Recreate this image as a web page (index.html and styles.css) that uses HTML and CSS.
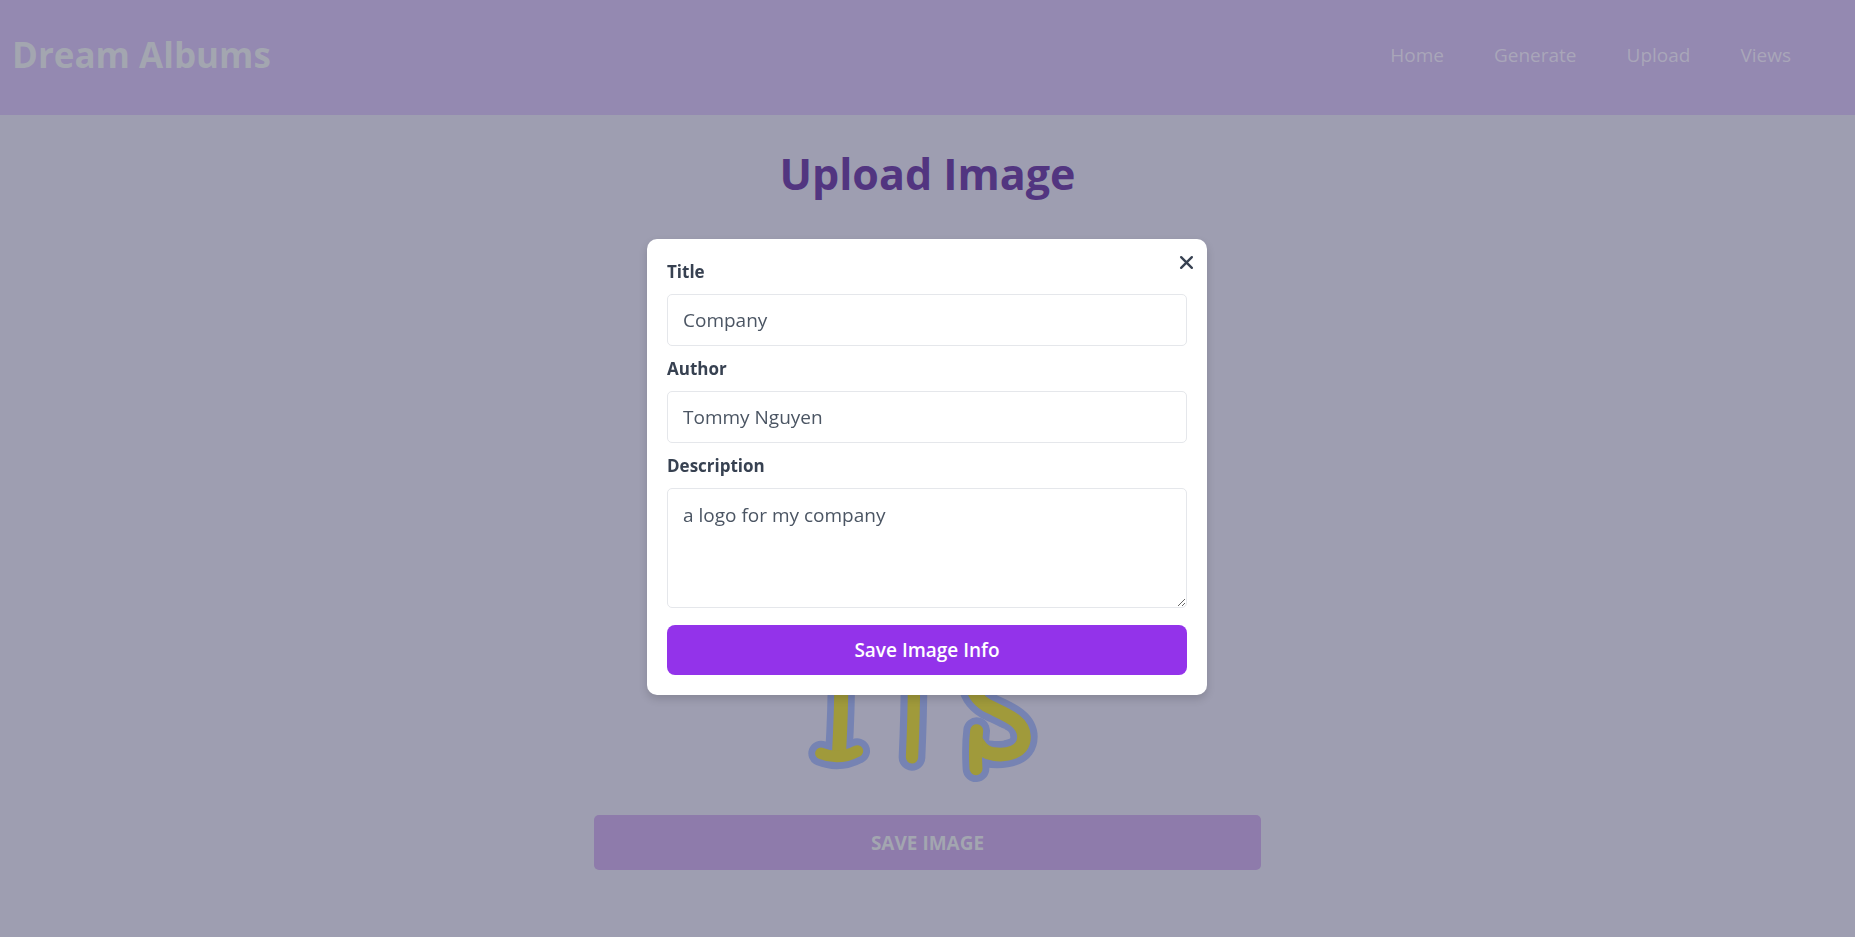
FILE: index.html
```
<!DOCTYPE html>
<html lang="en">
<head>
<meta charset="utf-8">
<meta name="viewport" content="width=device-width, initial-scale=1">
<title>Dream Albums</title>
<link rel="stylesheet" href="styles.css">
</head>
<body>
<header class="navbar">
  <a class="brand" href="#">Dream Albums</a>
  <nav class="nav-links">
    <a href="#">Home</a>
    <a href="#">Generate</a>
    <a href="#">Upload</a>
    <a href="#">Views</a>
  </nav>
</header>
<main class="page">
  <h1 class="page-title">Upload Image</h1>
  <svg class="preview" viewBox="0 -1335 885 1665" aria-hidden="true">
    <g class="outline">
      <path d="M184-100V0Q184 90 177 212" stroke-width="82"/>
      <path d="M123 220Q177 242 232 213" stroke-width="76"/>
      <path d="M402-100V0Q402 100 396 232" stroke-width="80"/>
      <path d="M600-100C560-40 560 40 620 76C665 100 731 118 732 170C732 218 680 228 622 222" stroke-width="82"/>
      <path d="M590 152Q584 200 588 266" stroke-width="80"/>
    </g>
    <path class="hole" d="M628 135C660 139 689 150 690 164C690 178 668 184 641 183Q634 165 628 135Z"/>
    <g class="fill">
      <path d="M184-100V0Q184 90 177 222" stroke-width="42"/>
      <path d="M123 220Q177 242 232 213" stroke-width="35"/>
      <path d="M402-100V0Q402 100 396 232" stroke-width="37"/>
      <path d="M600-100C560-40 560 40 620 76C665 100 731 118 732 170C732 218 680 228 640 222Q612 220 594 190" stroke-width="41"/>
      <path d="M590 152Q584 200 588 266" stroke-width="39"/>
    </g>
  </svg>
  <button class="save-image" type="button">SAVE IMAGE</button>
</main>
<div class="overlay">
  <form class="modal" role="dialog" aria-label="Image info">
    <button class="close" type="button" aria-label="Close">
      <svg viewBox="0 0 14 14" aria-hidden="true"><path d="M2 2L12 12M12 2L2 12"/></svg>
    </button>
    <label for="title">Title</label>
    <input id="title" type="text" value="Company">
    <label for="author">Author</label>
    <input id="author" type="text" value="Tommy Nguyen">
    <label for="description">Description</label>
    <textarea id="description">a logo for my company</textarea>
    <button class="submit" type="submit">Save Image Info</button>
  </form>
</div>
</body>
</html>
```
FILE: styles.css
```
* { box-sizing: border-box; }

body {
  margin: 0;
  min-height: 100vh;
  background: #9e9eb1;
  font: 19px/30px "Segoe UI", "Open Sans", "Noto Sans", sans-serif;
}

a { color: inherit; text-decoration: none; }

button, input, textarea { font: inherit; }

.navbar {
  display: flex;
  align-items: center;
  justify-content: space-between;
  padding: 30px 64px 35px 12px;
  background: #9489b1;
}

.brand {
  color: #a3a6b0;
  font-size: 35px;
  font-weight: 700;
  line-height: 50px;
}

.nav-links {
  display: flex;
  gap: 50px;
  color: #a9a6b9;
}

.page {
  display: flex;
  flex-direction: column;
  align-items: center;
  padding: 34px 20px 67px;
}

.page-title {
  margin: 0 0 36px;
  color: #523580;
  font-size: 43px;
  font-weight: 700;
  line-height: 50px;
}

.preview {
  width: 295px;
  height: 555px;
  fill: none;
  stroke-linecap: round;
  stroke-linejoin: round;
}

.preview .outline { stroke: #7683b3; }
.preview .fill { stroke: #a09a3b; }
.preview .hole { fill: #9e9eb1; }

.save-image {
  width: 667px;
  max-width: 100%;
  height: 55px;
  margin-top: 25px;
  border: 0;
  border-radius: 5px;
  background: #8e7bab;
  color: #a3a6b0;
  font-weight: 700;
}

.overlay {
  position: fixed;
  inset: 0;
  display: flex;
  align-items: center;
  justify-content: center;
  padding: 0 1px 3px 0;
}

.modal {
  position: relative;
  display: flex;
  flex-direction: column;
  width: 560px;
  max-width: 100%;
  padding: 18px 20px 20px;
  border-radius: 10px;
  background: #fff;
  box-shadow: 0 4px 8px rgba(0, 0, 0, 0.15);
  color: #374151;
}

.modal label {
  margin-bottom: 7px;
  font-size: 17px;
  font-weight: 700;
}

.modal input,
.modal textarea {
  margin: 0 0 8px;
  padding: 10px 15px;
  border: 1px solid #e5e7eb;
  border-radius: 5px;
  background: #fff;
  color: #4b5563;
}

.modal input { height: 52px; }

.modal textarea {
  height: 120px;
  margin-bottom: 17px;
  padding-top: 11px;
  resize: vertical;
}

.submit {
  height: 50px;
  border: 0;
  border-radius: 8px;
  background: #9333ea;
  color: #fff;
  font-weight: 600;
}

.close {
  position: absolute;
  top: 16px;
  right: 13px;
  display: flex;
  padding: 0;
  border: 0;
  background: none;
}

.close svg {
  width: 15px;
  height: 15px;
  fill: none;
  stroke: #374151;
  stroke-width: 2.2;
  stroke-linecap: round;
}
```
